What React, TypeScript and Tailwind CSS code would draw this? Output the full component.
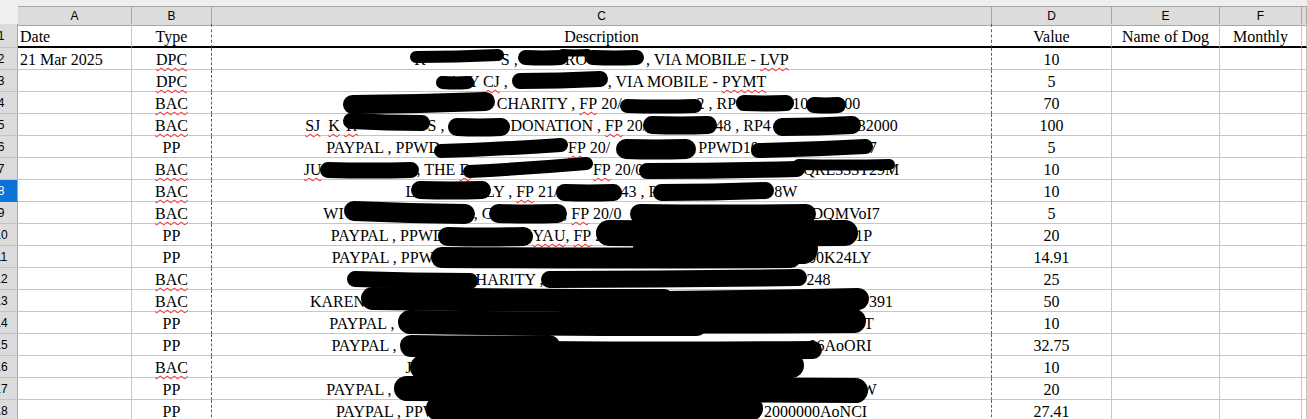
import React from "react";
import clsx from "clsx";

// xa, xb, top, bottom, tilt  (x from the spacer's left edge, y from the row's top)
type Stroke = [number, number, number, number, number?];
type Seg = string | { u: string } | { w: number; s: Stroke[] };

const GRID = "grid grid-cols-[18px_114px_80px_780px_120px_108px_82px_1fr]";
const SANS = "font-['Liberation_Sans',Arial,sans-serif] text-[12px]";

const U = (u: string): Seg => ({ u });
const R = (w: number, s: Stroke[]): Seg => ({ w, s });

type Row = { n: number; a?: string; b: string; c: Seg[]; d: string };

const rows: Row[] = [
  { n: 2, a: "21 Mar 2025", b: "DPC", d: "10", c: ["K", R(75, [[-16, 78, 1, 15, 2]]), "S , ", R(43, [[-4, 46, 2, 17]]), "RO", R(55, [[-2, 57, 2, 17], [-28, 4, 1, 8]]), " , VIA MOBILE - ", U("LVP")] },
  { n: 3, b: "DPC", d: "5", c: ["GA", R(8, [[-24, 14, 6, 19]]), "Y ", U("CJ"), " , ", R(96, [[0, 96, 1, 19, 2]]), ", VIA MOBILE - ", U("PYMT")] },
  { n: 4, b: "BAC", d: "70", c: [R(150, [[0, 152, 0, 22, 3]]), " CHARITY , ", U("FP"), " 20/", R(75, [[-2, 80, 7, 21]]), "2 , RP4", R(48, [[-8, 50, 3, 19]]), "10", R(36, [[-2, 38, 5, 21]]), "00"] },
  { n: 5, b: "BAC", d: "100", c: [U("SJ"), "  ", U("K"), " ", U("Tr"), R(54, [[-15, 72, -1, 17, -2]]), "WS , ", R(62, [[0, 62, 4, 22]]), "DONATION , ", U("FP"), " 20/", R(68, [[-4, 70, 2, 20]]), "48 , RP4", R(87, [[2, 90, 2, 22, 2]]), "32000"] },
  { n: 6, b: "PP", d: "5", c: ["PAYPAL , PPWD", R(128, [[-6, 128, 2, 22, 6]]), U("FP"), " 20/", R(80, [[6, 86, 3, 23]]), ", PPWD10", R(110, [[-8, 114, 3, 22, 4]]), "7"] },
  { n: 7, b: "BAC", d: "10", c: [U("JU"), R(95, [[-2, 97, 4, 20]]), ", THE ", U("D"), R(122, [[-8, 122, -1, 20, 8]]), U("FP"), " 20/0", R(160, [[-4, 162, 3, 21, 2], [150, 252, 1, 12]]), "QRL333T29M"] },
  { n: 8, b: "BAC", d: "10", c: ["LE", R(60, [[-14, 66, 1, 19]]), "LY , ", U("FP"), " 21/", R(62, [[-2, 64, 4, 21]]), "43 , P", R(117, [[-4, 117, 2, 21, 2]]), "8W"] },
  { n: 9, b: "BAC", d: "5", c: ["WI", R(130, [[0, 131, -1, 22, -3]]), ", G", R(70, [[-4, 74, 2, 21]]), ", ", U("FP"), " 20/0", R(190, [[8, 194, 2, 22]]), "DQMVoI7"] },
  { n: 10, b: "PP", d: "20", c: ["PAYPAL , PPWD", R(88, [[-7, 88, 3, 22]]), U("YAU"), ", ", U("FP"), " 2", R(244, [[-7, 255, -4, 22], [30, 215, 10, 40]]), "91P"] },
  { n: 11, b: "PP", d: "14.91", c: ["PAYPAL , PPWI", R(345, [[-8, 362, 1, 22]]), "00000K24LY"] },
  { n: 12, b: "BAC", d: "25", c: [R(103, [[-26, 105, 3, 21, -2]]), "HARITY , ", R(259, [[-6, 260, 1, 20, 2]]), "248"] },
  { n: 13, b: "BAC", d: "50", c: ["KAREN", R(504, [[-4, 310, -3, 22, -2], [190, 504, -2, 24, 4]]), "391"] },
  { n: 14, b: "PP", d: "10", c: ["PAYPAL , ", R(454, [[0, 310, -2, 24, -2], [240, 468, -3, 21]]), "DT"] },
  { n: 15, b: "PP", d: "32.75", c: ["PAYPAL , P", R(399, [[-10, 150, 1, 23], [120, 412, 7, 25]]), "06AoORI"] },
  { n: 16, b: "BAC", d: "10", c: ["J", R(386, [[-2, 392, -3, 24, 2]])] },
  { n: 17, b: "PP", d: "20", c: ["PAYPAL , ", R(466, [[-2, 472, -2, 25, -2]]), "W"] },
  { n: 18, b: "PP", d: "27.41", c: ["PAYPAL , PPW", R(326, [[-12, 325, -4, 21]]), "2000000AoNCI"] },
];

function Wavy({ children }: { children: React.ReactNode }) {
  return (
    <span className="underline decoration-wavy decoration-[#e41c1c] decoration-1 underline-offset-[2px]">
      {children}
    </span>
  );
}

function Redact({ w, s }: { w: number; s: Stroke[] }) {
  return (
    <span className="relative inline-block h-[18px] align-top" style={{ width: w }}>
      <svg className="absolute left-0 top-[-3px] overflow-visible" width={w} height={22}>
        {s.map(([xa, xb, yt, yb, tilt = 0], i) => {
          const t = yb - yt - Math.abs(tilt);
          const yc = (yt + yb) / 2;
          return (
            <path
              key={i}
              d={`M${xa + t / 2} ${yc + tilt / 2} Q${(xa + xb) / 2} ${yc + 1} ${xb - t / 2} ${yc - tilt / 2}`}
              stroke="#000"
              strokeWidth={t}
              strokeLinecap="round"
              fill="none"
            />
          );
        })}
      </svg>
    </span>
  );
}

function Desc({ segs }: { segs: Seg[] }) {
  return (
    <>
      {segs.map((g, i) =>
        typeof g === "string" ? (
          <span key={i}>{g}</span>
        ) : "u" in g ? (
          <Wavy key={i}>{g.u}</Wavy>
        ) : (
          <Redact key={i} w={g.w} s={g.s} />
        )
      )}
    </>
  );
}

function RowHead({ n, sel }: { n: number; sel?: boolean }) {
  return (
    <div
      className={clsx(
        "flex items-center overflow-hidden border-r border-b border-r-[#a8a8a8]",
        sel ? "bg-[#0b74d6] text-white border-b-[#0b74d6]" : "bg-[#dcdcdc] text-black border-b-[#c2c2c2]",
        SANS
      )}
    >
      <span className="ml-[-14px] w-[30px] shrink-0 text-center">{n}</span>
    </div>
  );
}

function Cell({
  children,
  dashed,
  first,
  left,
}: {
  children?: React.ReactNode;
  dashed?: boolean;
  first?: boolean;
  left?: boolean;
}) {
  return (
    <div
      className={clsx(
        "flex items-end border-r whitespace-pre leading-[18px]",
        dashed ? "border-r-[#5f5f5f] [border-right-style:dashed]" : "border-r-[#c6c6c6]",
        first ? "border-b-2 border-b-black" : "border-b border-b-[#c6c6c6]",
        left ? "justify-start pl-[2px]" : "justify-center"
      )}
    >
      {children}
    </div>
  );
}

export default function App() {
  return (
    <div className="h-[419px] w-[1307px] overflow-hidden bg-white text-black font-['Liberation_Serif','Times_New_Roman',serif] text-[16px]">
      <div className="h-[6px] bg-[#efefef]" />

      <div className={clsx(GRID, "h-[18px]", SANS)}>
        <div className="bg-[#efefef]" />
        {["A", "B", "C", "D", "E", "F", ""].map((l, i) => (
          <div
            key={i}
            className="flex items-center justify-center border-t border-r border-b border-[#a8a8a8] bg-[#dcdcdc]"
          >
            {l}
          </div>
        ))}
      </div>

      <div className={clsx(GRID, "h-[24px]")}>
        <RowHead n={1} />
        <Cell first left>Date</Cell>
        <Cell first dashed>Type</Cell>
        <Cell first dashed>Description</Cell>
        <Cell first>Value</Cell>
        <Cell first>Name of Dog</Cell>
        <Cell first>Monthly</Cell>
        <Cell first />
      </div>

      {rows.map((r) => (
        <div key={r.n} className={clsx(GRID, "h-[22px]")}>
          <RowHead n={r.n} sel={r.n === 8} />
          <Cell left>{r.a}</Cell>
          <Cell dashed>{r.b === "PP" ? r.b : <Wavy>{r.b}</Wavy>}</Cell>
          <Cell dashed>
            <Desc segs={r.c} />
          </Cell>
          <Cell>{r.d}</Cell>
          <Cell />
          <Cell />
          <Cell />
        </div>
      ))}
    </div>
  );
}
